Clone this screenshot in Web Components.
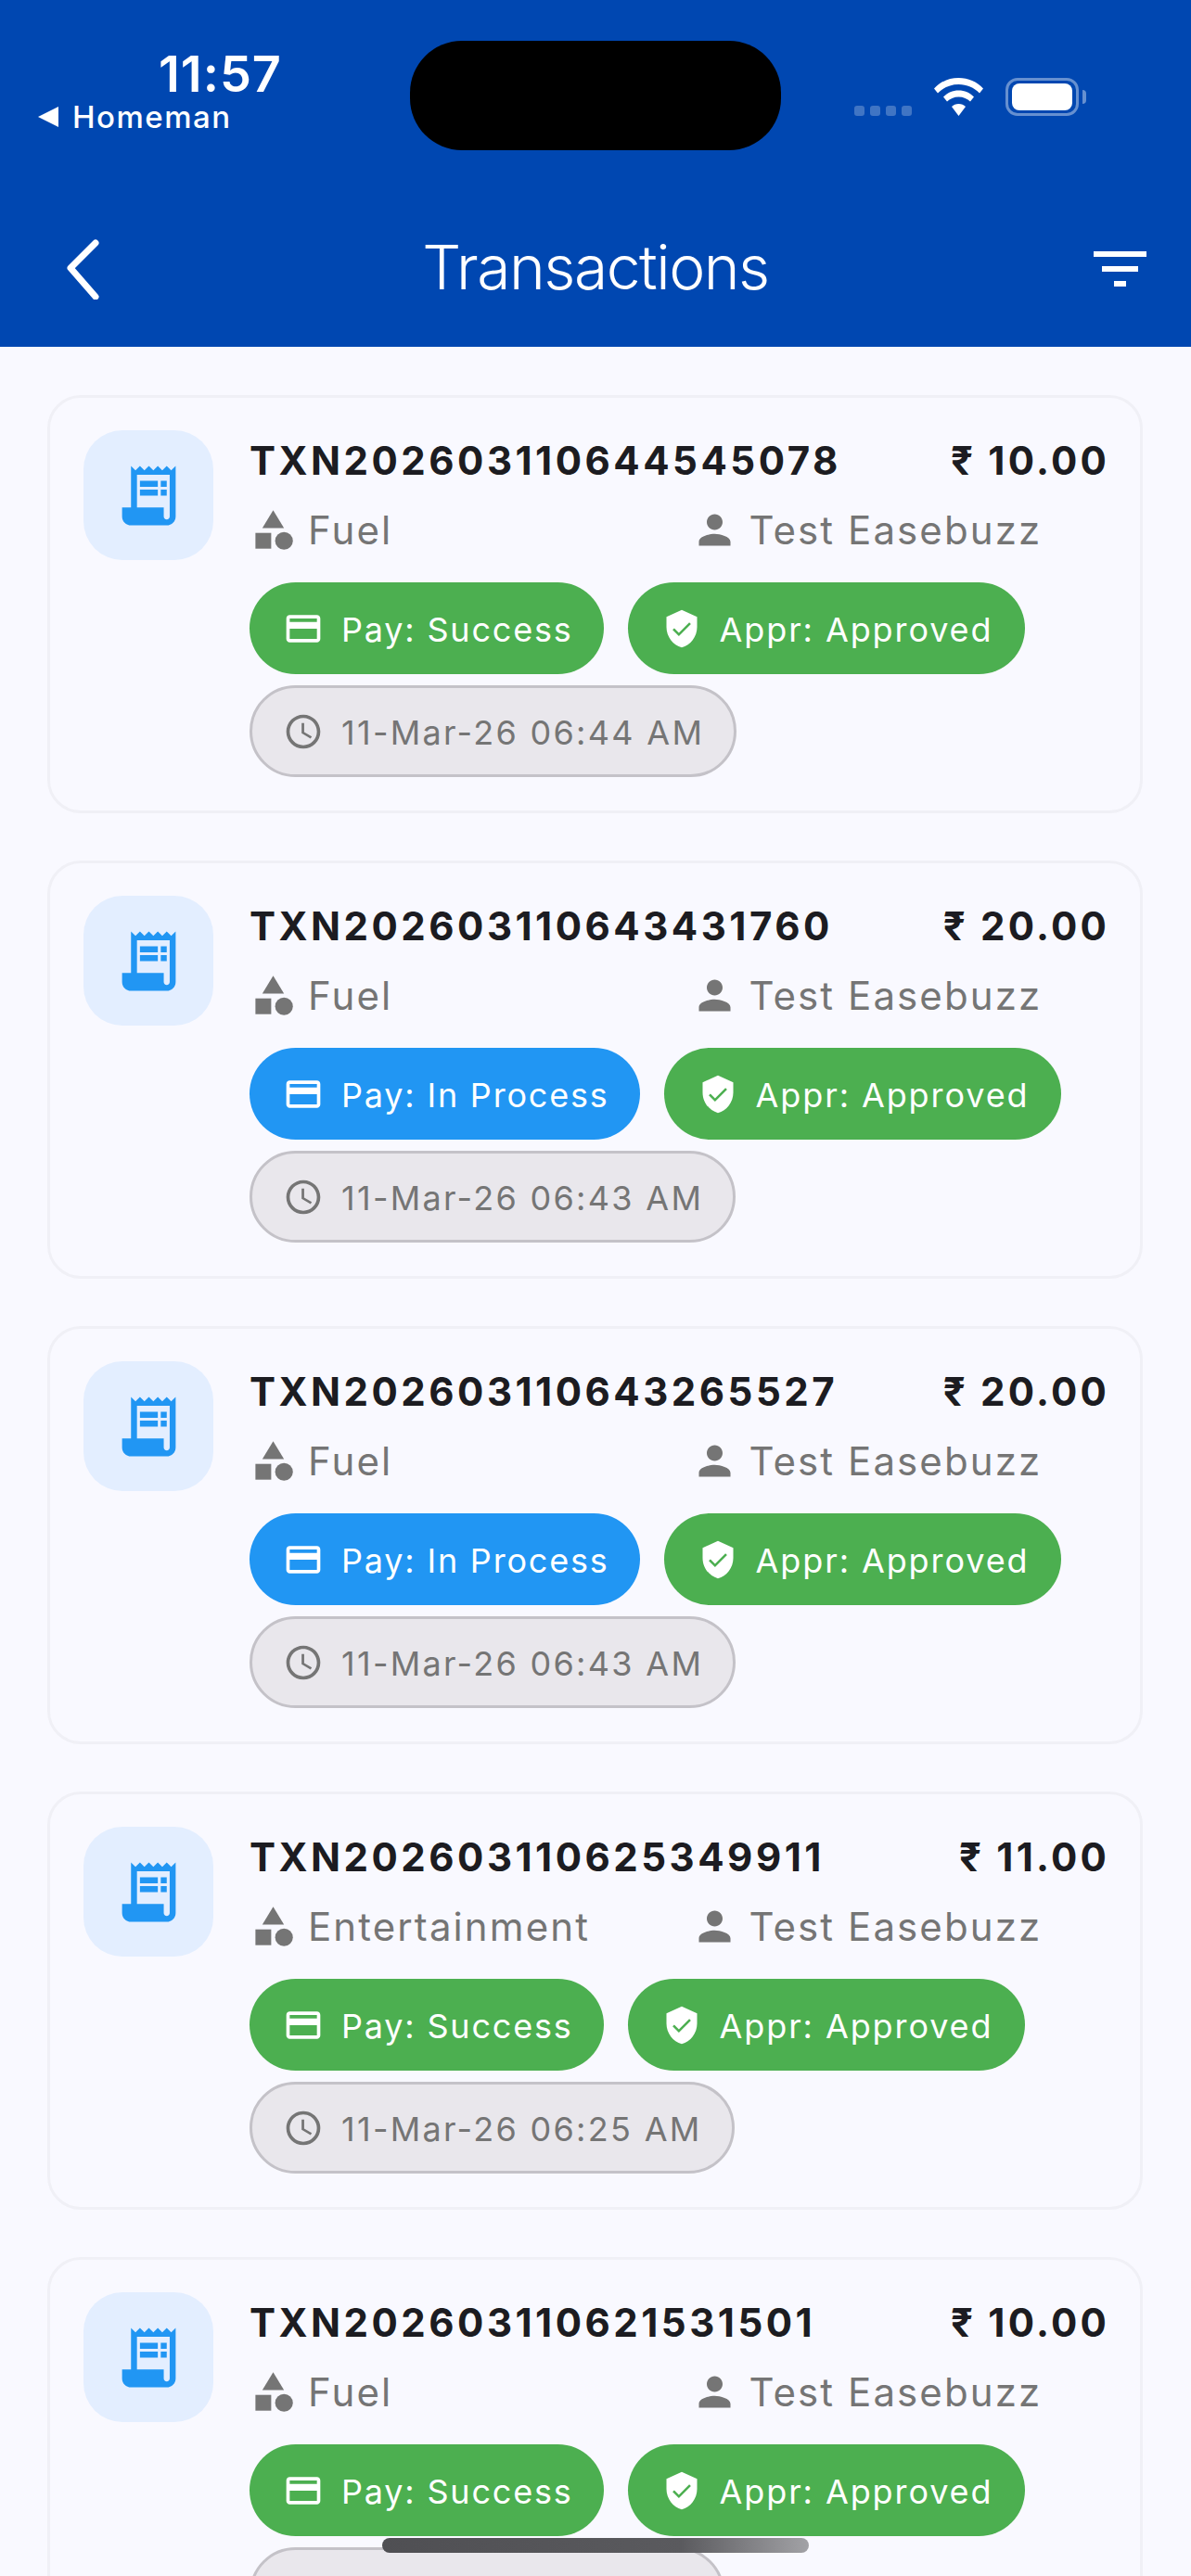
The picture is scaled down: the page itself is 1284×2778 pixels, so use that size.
<!DOCTYPE html>
<html>
<head>
<meta charset="utf-8">
<title>Transactions</title>
<style>
  html, body { margin: 0; padding: 0; height: 2778px; overflow: hidden; background: #f9f9ff; font-family: Inter, "Noto Sans", sans-serif; }
  app-shell { width: 1284px; height: 2778px; }
</style>
</head>
<body>
<app-shell>
  <status-bar slot="top" time="11:57" back="Homeman"></status-bar>
  <app-bar slot="top" title="Transactions"></app-bar>

  <txn-card txn="TXN202603110644545078" amount="₹ 10.00" category="Fuel" user="Test Easebuzz">
    <status-pill tone="green" icon="card">Pay: Success</status-pill>
    <status-pill tone="green" icon="shield">Appr: Approved</status-pill>
    <status-pill tone="grey" icon="clock">11-Mar-26 06:44 AM</status-pill>
  </txn-card>
  <txn-card txn="TXN202603110643431760" amount="₹ 20.00" category="Fuel" user="Test Easebuzz">
    <status-pill tone="blue" icon="card">Pay: In Process</status-pill>
    <status-pill tone="green" icon="shield">Appr: Approved</status-pill>
    <status-pill tone="grey" icon="clock">11-Mar-26 06:43 AM</status-pill>
  </txn-card>
  <txn-card txn="TXN202603110643265527" amount="₹ 20.00" category="Fuel" user="Test Easebuzz">
    <status-pill tone="blue" icon="card">Pay: In Process</status-pill>
    <status-pill tone="green" icon="shield">Appr: Approved</status-pill>
    <status-pill tone="grey" icon="clock">11-Mar-26 06:43 AM</status-pill>
  </txn-card>
  <txn-card txn="TXN202603110625349911" amount="₹ 11.00" category="Entertainment" user="Test Easebuzz">
    <status-pill tone="green" icon="card">Pay: Success</status-pill>
    <status-pill tone="green" icon="shield">Appr: Approved</status-pill>
    <status-pill tone="grey" icon="clock">11-Mar-26 06:25 AM</status-pill>
  </txn-card>
  <txn-card txn="TXN202603110621531501" amount="₹ 10.00" category="Fuel" user="Test Easebuzz">
    <status-pill tone="green" icon="card">Pay: Success</status-pill>
    <status-pill tone="green" icon="shield">Appr: Approved</status-pill>
    <status-pill tone="grey" style="width:512px"></status-pill>
  </txn-card>

  <home-indicator slot="overlay"></home-indicator>
</app-shell>

<script>
const ICONS = {
  receipt: '<path d="M19.5 3.5 18 2l-1.5 1.5L15 2l-1.5 1.5L12 2l-1.5 1.5L9 2 7.5 3.5 6 2v14H3v3c0 1.66 1.34 3 3 3h12c1.66 0 3-1.34 3-3V2l-1.5 1.5zM19 19c0 .55-.45 1-1 1s-1-.45-1-1v-3H8V5h11v14z"/><path d="M9 7h6v2H9zm7 0h2v2h-2zM9 10h6v2H9zm7 0h2v2h-2z"/>',
  category: '<path d="M12 2l-5.5 9h11z"/><circle cx="17.5" cy="17.5" r="4.5"/><path d="M3 13.5h8v8H3z"/>',
  person: '<path d="M12 12c2.21 0 4-1.79 4-4s-1.79-4-4-4-4 1.79-4 4 1.79 4 4 4zm0 2c-2.67 0-8 1.34-8 4v2h16v-2c0-2.66-5.33-4-8-4z"/>',
  card: '<path d="M20 4H4c-1.11 0-1.99.89-1.99 2L2 18c0 1.11.89 2 2 2h16c1.11 0 2-.89 2-2V6c0-1.11-.89-2-2-2zm0 14H4v-6h16v6zm0-10H4V6h16v2z"/>',
  shield: '<path fill-rule="evenodd" d="M12 1L3 5v6c0 5.55 3.84 10.74 9 12 5.16-1.26 9-6.45 9-12V5l-9-4zm-1.7 15.4L6.6 12.700l1-1 2.700 2.700 6.100-6.100 1 1-7.100 7.100z"/>',
  clock: '<path d="M11.99 2C6.47 2 2 6.48 2 12s4.47 10 9.99 10C17.52 22 22 17.52 22 12S17.52 2 11.99 2zM12 20c-4.42 0-8-3.58-8-8s3.58-8 8-8 8 3.58 8 8-3.58 8-8 8z"/><path d="M12.5 7H11v6l5.25 3.15.75-1.23-4.5-2.67z"/>'
};
const icon = (name, size) => `<svg width="${size}" height="${size}" viewBox="0 0 24 24" fill="currentColor" aria-hidden="true">${ICONS[name] || ''}</svg>`;

class AppShell extends HTMLElement {
  constructor() {
    super();
    this.attachShadow({ mode: 'open' }).innerHTML = `
      <style>
        :host { display: block; position: relative; overflow: hidden; background: #f9f9ff; }
        header { background: #0047b1; }
        main { display: flex; flex-direction: column; gap: 51px; padding: 52px 52px 0 51px; }
      </style>
      <header><slot name="top"></slot></header>
      <main><slot></slot></main>
      <slot name="overlay"></slot>
    `;
  }
}

class StatusBar extends HTMLElement {
  connectedCallback() {
    const time = this.getAttribute('time') || '';
    const back = this.getAttribute('back') || '';
    this.attachShadow({ mode: 'open' }).innerHTML = `
      <style>
        :host { display: grid; grid-template-columns: 1fr 400px 1fr; height: 206px; padding-top: 44px; box-sizing: border-box; color: #fff; }
        .left { display: flex; flex-direction: column; padding-left: 41px; }
        .time { font: 600 54px/54px Inter, sans-serif; letter-spacing: 1px; margin: 9px 0 0 130px; }
        .back { display: flex; align-items: center; gap: 15px; font: 500 33px/36px Inter, sans-serif; letter-spacing: 1.500px; margin-top: 1px; }
        .back i { width: 0; height: 0; border: 11px solid transparent; border-left: 0; border-right: 22px solid #fff; }
        .island { height: 118px; background: #000; border-radius: 56px; }
        .right { display: flex; align-items: flex-start; padding: 40px 0 0 79px; }
        .dots { display: flex; gap: 6px; margin: 30px 24px 0 0; }
        .dots b { width: 11px; height: 11px; border-radius: 3px; background: rgba(255,255,255,.25); }
        .wifi { margin-right: 24px; }
        .batt { position: relative; width: 79px; height: 41px; box-sizing: border-box; border: 3px solid rgba(255,255,255,.4); border-radius: 13px; padding: 3px 4px; }
        .batt u { display: block; height: 100%; background: #fff; border-radius: 8px; }
        .batt::after { content: ''; position: absolute; left: 80px; top: 10px; width: 4px; height: 15px; background: rgba(255,255,255,.4); border-radius: 0 4px 4px 0; }
      </style>
      <div class="left">
        <div class="time">${time}</div>
        <div class="back"><i></i><span>${back}</span></div>
      </div>
      <div class="island"></div>
      <div class="right">
        <div class="dots"><b></b><b></b><b></b><b></b></div>
        <svg class="wifi" width="53" height="41" viewBox="0 0 53 41" fill="#fff">
          <path d="M0 11.500C7 4 16 0 26.500 0S46 4 53 11.500l-4 5C43 10.500 35.500 7 26.500 7S10 10.500 4 16.500z"/>
          <path d="M10 20.500C14.500 16 20 13.500 26.500 13.500S38.500 16 43 20.500l-4 5C36 22.500 31.500 20.500 26.500 20.500S17 22.500 14 25.500z"/>
          <path d="M19 31C21 29 23.500 28 26.500 28S32 29 34 31L26.500 41z"/>
        </svg>
        <div class="batt"><u></u></div>
      </div>
    `;
  }
}

class AppBar extends HTMLElement {
  connectedCallback() {
    this.attachShadow({ mode: 'open' }).innerHTML = `
      <style>
        :host { display: grid; grid-template-columns: 1fr auto 1fr; align-items: center; height: 168px; padding: 0 48px; color: #fff; }
        svg { margin-left: 22px; }
        h1 { margin: -4px 0 0; font: 300 66px/80px Inter, sans-serif; letter-spacing: -1.500px; }
        .filter { justify-self: end; display: flex; flex-direction: column; align-items: center; gap: 10px; }
        .filter b { display: block; height: 6px; background: #fff; }
      </style>
      <svg width="38" height="66" viewBox="0 0 38 66" fill="none" stroke="#fff" stroke-width="7" stroke-linecap="round" stroke-linejoin="round"><path d="M33 5L6 32l27 31"/></svg>
      <h1>${this.getAttribute('title') || ''}</h1>
      <div class="filter"><b style="width:57px"></b><b style="width:39px"></b><b style="width:13px"></b></div>
    `;
  }
}

class TxnCard extends HTMLElement {
  connectedCallback() {
    const a = (n) => this.getAttribute(n) || '';
    this.attachShadow({ mode: 'open' }).innerHTML = `
      <style>
        :host { display: flex; align-items: flex-start; gap: 39px; padding: 36px; background: #f9f9ff; border: 3px solid #f0f0f6; border-radius: 36px; flex: none; }
        .thumb { flex: none; width: 140px; height: 140px; margin-top: -1px; border-radius: 42px; background: #e3eeff; color: #2196f3; display: flex; align-items: center; justify-content: center; }
        .body { flex: 1; min-width: 0; }
        .head { display: flex; justify-content: space-between; align-items: center; height: 60px; margin-top: 2px; color: #1c1c21; font: 700 42px/60px Inter, sans-serif; letter-spacing: 3.500px; }
        .amount { letter-spacing: 3.200px; margin-right: -3px; }
        .meta { display: grid; grid-template-columns: 1fr 1fr; column-gap: 27px; margin: 19px 0 31px; color: #757575; font: 400 42px/51px Inter, sans-serif; letter-spacing: 2.100px; }
        .meta div { display: flex; align-items: center; gap: 12px; }
        .pills { display: flex; flex-wrap: wrap; gap: 12px 26px; }
      </style>
      <div class="thumb">${icon('receipt', 77)}</div>
      <div class="body">
        <div class="head"><span>${a('txn')}</span><span class="amount">${a('amount')}</span></div>
        <div class="meta">
          <div>${icon('category', 51)}<span>${a('category')}</span></div>
          <div>${icon('person', 51)}<span>${a('user')}</span></div>
        </div>
        <div class="pills"><slot></slot></div>
      </div>
    `;
  }
}

class StatusPill extends HTMLElement {
  connectedCallback() {
    const name = this.getAttribute('icon');
    this.attachShadow({ mode: 'open' }).innerHTML = `
      <style>
        :host { display: inline-flex; align-items: center; gap: 19px; box-sizing: border-box; height: 99px; padding: 0 33px 0 36px; border-radius: 50px; color: #fff; background: #4caf50; font: 400 36px/44px Inter, sans-serif; letter-spacing: 1.800px; white-space: nowrap; }
        :host([tone="blue"]) { background: #2196f3; }
        :host([icon="shield"]) { padding-right: 35px; letter-spacing: 1.900px; }
        :host([tone="grey"]) { background: #e9e7ec; border: 3px solid #c4c2c8; color: #757575; padding: 0 32px 0 33px; letter-spacing: 2.300px; }
        span { padding-top: 2px; }
      </style>
      ${name ? icon(name, 44) : ''}<span><slot></slot></span>
    `;
  }
}

class HomeIndicator extends HTMLElement {
  constructor() {
    super();
    this.attachShadow({ mode: 'open' }).innerHTML = `
      <style>
        :host { position: absolute; left: 412px; top: 2737px; width: 460px; height: 16px; border-radius: 8px; background: linear-gradient(90deg, #4f4f53 0%, #5a5a5e 70%, #a2a2a6 100%); }
      </style>
    `;
  }
}

customElements.define('app-shell', AppShell);
customElements.define('status-bar', StatusBar);
customElements.define('app-bar', AppBar);
customElements.define('txn-card', TxnCard);
customElements.define('status-pill', StatusPill);
customElements.define('home-indicator', HomeIndicator);
</script>
</body>
</html>
